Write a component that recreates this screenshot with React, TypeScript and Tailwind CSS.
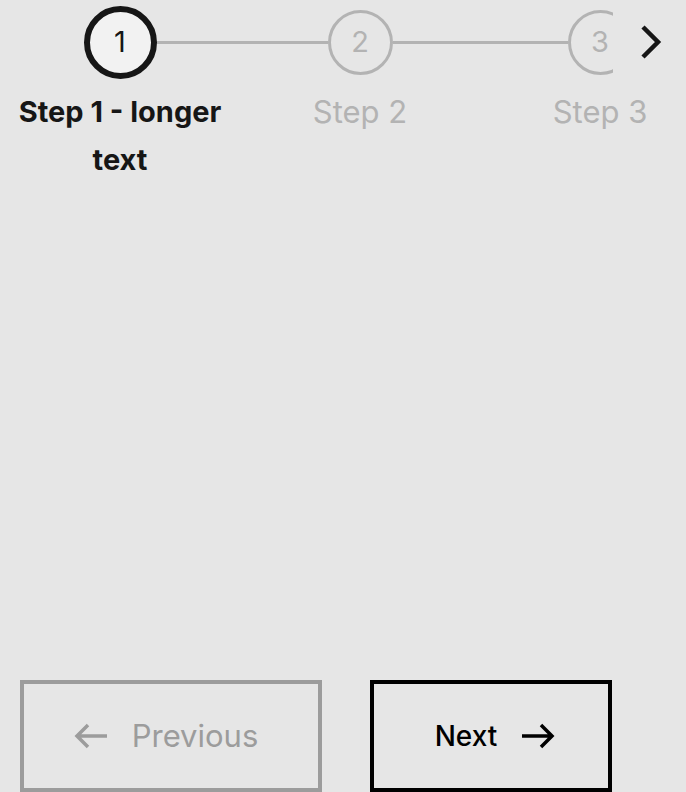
const steps = [
  { n: 1, label: 'Step 1 - longer text', active: true },
  { n: 2, label: 'Step 2', active: false },
  { n: 3, label: 'Step 3', active: false },
]

function Arrow({ dir, className }: { dir: 'left' | 'right'; className: string }) {
  return (
    <svg width="34" height="26" viewBox="0 0 34 26" fill="none" stroke="currentColor" strokeWidth={3.5} className={className}>
      {dir === 'right' ? (
        <path d="M1 13h30M20 2l11 11-11 11" />
      ) : (
        <path d="M33 13H3M14 2L3 13l11 11" />
      )}
    </svg>
  )
}

export default function App() {
  return (
    <div className="flex h-[792px] w-[686px] flex-col justify-between overflow-hidden bg-[#e6e6e6] font-['Inter',sans-serif]">
      <div className="relative">
        <div className="flex">
          {steps.map((s, i) => (
            <div key={s.n} className="flex w-[240px] shrink-0 flex-col items-center">
              <div className="flex h-[84px] w-full items-center">
                <div className={`h-[3px] flex-1 ${i === 0 ? '' : 'bg-[#b3b3b3]'}`} />
                {s.active ? (
                  <div className="flex h-[73px] w-[73px] items-center justify-center rounded-full border-[6px] border-[#161616] bg-[#f2f2f2] text-[29px] text-[#161616]">
                    {s.n}
                  </div>
                ) : (
                  <div className="flex h-[65px] w-[65px] items-center justify-center rounded-full border-[3px] border-[#b3b3b3] text-[29px] text-[#b3b3b3]">
                    {s.n}
                  </div>
                )}
                <div className={`h-[3px] flex-1 ${i === steps.length - 1 ? 'bg-transparent' : 'bg-[#b3b3b3]'}`} />
              </div>
              <div
                className={`mt-1 px-4 text-center leading-[48px] ${
                  s.active ? 'text-[29px] font-bold text-[#161616]' : 'text-[31px] text-[#b3b3b3]'
                }`}
              >
                {s.label}
              </div>
            </div>
          ))}
        </div>
        <button className="absolute left-[613px] top-0 flex h-[84px] w-[73px] items-center justify-center bg-[#e6e6e6] pl-[3px]">
          <svg width="24" height="36" viewBox="0 0 24 36" fill="none" stroke="#161616" strokeWidth={4.5}>
            <path d="M4 3l15 15L4 33" />
          </svg>
        </button>
      </div>

      <div className="flex gap-[48px] pl-5">
        <button className="flex h-[112px] w-[302px] items-center justify-center gap-6 border-4 border-[#9c9c9c] pr-[10px] text-[31px] text-[#9c9c9c]">
          <Arrow dir="left" className="text-[#9c9c9c]" />
          Previous
        </button>
        <button className="flex h-[112px] w-[242px] items-center justify-center gap-6 border-4 border-black pl-2 text-[28px] font-medium text-black">
          Next
          <Arrow dir="right" className="text-black" />
        </button>
      </div>
    </div>
  )
}
